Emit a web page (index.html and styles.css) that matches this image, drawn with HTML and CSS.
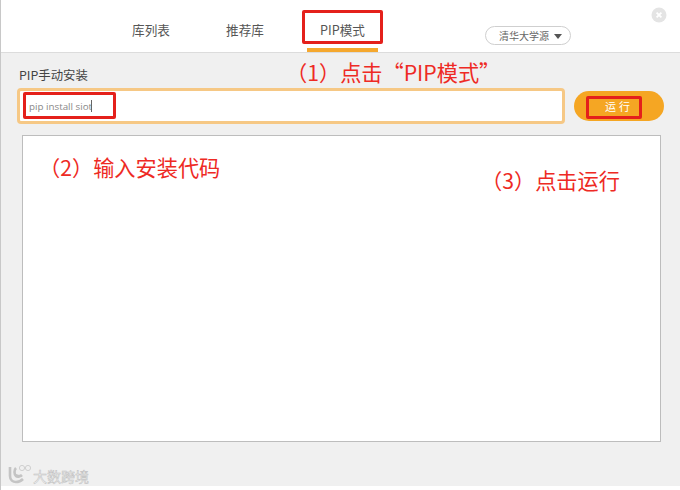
FILE: index.html
```html
<!DOCTYPE html>
<html lang="zh-CN">
<head>
<meta charset="utf-8">
<title>PIP模式</title>
<link rel="stylesheet" href="styles.css">
</head>
<body>
<div class="window">
  <header class="header">
    <nav class="tabs">
      <a class="tab tab-list">库列表</a>
      <a class="tab tab-rec">推荐库</a>
      <a class="tab tab-pip active">PIP模式</a>
    </nav>
    <div class="source"><span>清华大学源</span><i class="caret"></i></div>
    <svg class="close" width="16" height="16" viewBox="0 0 16 16"><circle cx="8" cy="8" r="7.5" fill="#e4e4e4"/><path d="M5.6 5.6l4.8 4.8M10.4 5.6l-4.8 4.8" stroke="#fff" stroke-width="1.8"/></svg>
  </header>
  <main class="main">
    <div class="label">PIP手动安装</div>
    <div class="input-row">
      <div class="input"><span class="input-text">pip install siot</span><i class="cursor"></i></div>
      <button class="run">运行</button>
    </div>
    <div class="output"></div>
    <div class="watermark">
      <svg width="27" height="20" viewBox="0 0 27 20"><path d="M3 3v9c0 4 3 6 6 6s5-1 7-3M9 4c-2 2-2 6 0 8 1 1 4 1 6-1M9 11c3 2 5 1 6 0" fill="none" stroke="#c4c4c4" stroke-width="2.6"/><circle cx="15" cy="4" r="2.6" fill="none" stroke="#d0d0d0" stroke-width="1"/><circle cx="21" cy="4" r="2.6" fill="none" stroke="#d0d0d0" stroke-width="1"/></svg>
      <span class="mark-text">大数跨境</span>
    </div>
  </main>
  <div class="footer-strip"></div>

  <div class="note note-1">（1）点击“PIP模式”</div>
  <div class="note note-2">（2）输入安装代码</div>
  <div class="note note-3">（3）点击运行</div>
  <div class="redbox box-tab"></div>
  <div class="redbox box-input"></div>
  <div class="redbox box-run"></div>
</div>
</body>
</html>
```
FILE: styles.css
```css
* { box-sizing: border-box; }
html, body { margin: 0; padding: 0; }
body {
  width: 680px;
  height: 490px;
  overflow: hidden;
  background: #fff;
  font-family: "Noto Sans CJK SC", "Open Sans", sans-serif;
}
.window {
  position: relative;
  width: 680px;
  height: 490px;
  display: flex;
  flex-direction: column;
  border-left: 1px solid #c8c8c8;
}
.header {
  height: 53px;
  flex: none;
  display: flex;
  background: #fff;
  border-bottom: 1px solid #dcdcdc;
  position: relative;
}
.tabs {
  display: flex;
  padding-left: 113px;
}
.tab {
  height: 52px;
  padding-top: 20px;
  font-size: 12.6px;
  line-height: 20px;
  color: #555;
  text-align: center;
}
.tab-list { width: 74px; }
.tab-rec { width: 114px; padding-left: 20px; padding-right: 20px; }
.tab-pip { width: 71px; margin-left: 5px; border-bottom: 4px solid #f5a82e; }
.source {
  margin-left: 107px;
  margin-top: 26px;
  width: 86px;
  height: 19px;
  border: 1px solid #cfcfcf;
  border-radius: 10px;
  display: flex;
  align-items: center;
  padding-left: 13px;
  font-size: 10px;
  color: #666;
  gap: 5px;
}
.caret {
  width: 0;
  height: 0;
  border-left: 4px solid transparent;
  border-right: 4px solid transparent;
  border-top: 5px solid #555;
  margin-top: 1px;
}
.close { margin-left: 80px; margin-top: 7px; }
.main {
  flex: 1;
  background: #f0f0f0;
  padding: 13px 0 0 16px;
  display: flex;
  flex-direction: column;
}
.label {
  font-size: 12.4px;
  line-height: 18px;
  color: #444;
  height: 22px;
  margin-left: 2px;
}
.input-row {
  display: flex;
  align-items: center;
  height: 36px;
}
.input {
  width: 548px;
  height: 36px;
  background: #fff;
  border: 3px solid #f6c885;
  border-radius: 4px;
  display: flex;
  align-items: center;
  padding-left: 9px;
}
.input-text {
  font-family: "Open Sans", sans-serif;
  font-size: 9.8px;
  color: #888;
}
.cursor { width: 1px; height: 12px; background: #666; margin-left: -1px; }
.run {
  margin-left: 9px;
  width: 90px;
  height: 30px;
  border: none;
  border-radius: 15px;
  background: #f5a623;
  color: #fff;
  font-family: inherit;
  font-size: 11px;
  letter-spacing: 3px;
  padding: 0;
}
.output {
  margin-top: 11px;
  margin-left: 5px;
  width: 639px;
  height: 307px;
  background: #fff;
  border: 1px solid #bdbdbd;
}
.watermark {
  display: flex;
  align-items: flex-end;
  margin-top: 22px;
  margin-left: -10px;
  height: 20px;
}
.mark-text {
  font-size: 14px;
  line-height: 16px;
  color: #f3f3f3;
  -webkit-text-stroke: 0.5px #c0c0c0;
  margin-left: -1px;
}
.footer-strip { height: 4px; flex: none; background: #fff; }
.note {
  position: absolute;
  color: #ee2a24;
  font-size: 21.2px;
  line-height: 26px;
  white-space: nowrap;
}
.note-1 { left: 285px; top: 59px; }
.note-2 { left: 38px; top: 154px; }
.note-3 { left: 480px; top: 167px; }
.redbox {
  position: absolute;
  border: 3px solid #e4201b;
  border-radius: 2px;
}
.box-tab { left: 301px; top: 10px; width: 81px; height: 34px; }
.box-input { left: 22px; top: 92px; width: 93px; height: 27px; }
.box-run { left: 585px; top: 96px; width: 56px; height: 23px; }
```
